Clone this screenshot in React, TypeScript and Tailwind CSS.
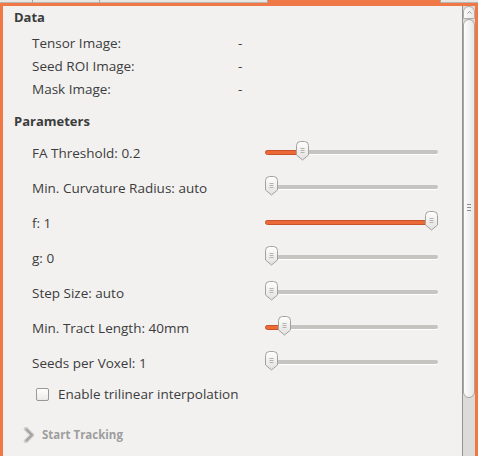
import React from "react";

const FONT = { fontFamily: '"Open Sans", "DejaVu Sans", sans-serif' };

function Thumb() {
  return (
    <svg width="13" height="20" viewBox="0 0 13 20" className="absolute top-[-9px]">
      <defs>
        <linearGradient id="tg" x1="0" y1="0" x2="0" y2="1">
          <stop offset="0" stopColor="#ffffff" />
          <stop offset="1" stopColor="#e2e0de" />
        </linearGradient>
      </defs>
      <path d="M0.5 4.5 Q0.5 0.5 4.5 0.5 L8.5 0.5 Q12.5 0.5 12.5 4.5 L12.5 14 L6.5 19 L0.5 14 Z" fill="url(#tg)" stroke="#a3a19e" />
      <line x1="4.5" y1="7.5" x2="8.5" y2="7.5" stroke="#b5b3b0" />
      <line x1="4.5" y1="9.5" x2="8.5" y2="9.5" stroke="#b5b3b0" />
      <line x1="4.5" y1="11.5" x2="8.5" y2="11.5" stroke="#b5b3b0" />
    </svg>
  );
}

function Slider({ pos }: { pos: number }) {
  return (
    <div className="relative w-[173px] h-[4px] rounded-full bg-[#c6c4c0] shadow-[0_1px_0_#ffffff]">
      {pos > 2 && (
        <div
          className="absolute left-0 top-[-0.5px] h-[5px] rounded-full bg-[#ec6a37] border border-[#c8532a]"
          style={{ width: pos + 6 }}
        />
      )}
      <div className="absolute top-0" style={{ left: pos }}>
        <Thumb />
      </div>
    </div>
  );
}

const params: [string, number][] = [
  ["FA Threshold: 0.2", 31],
  ["Min. Curvature Radius: auto", 0],
  ["f: 1", 160],
  ["g: 0", 0],
  ["Step Size: auto", 0],
  ["Min. Tract Length: 40mm", 13],
  ["Seeds per Voxel: 1", 0],
];

export default function App() {
  return (
    <div className="w-[478px] h-[456px] bg-[#f2f1f0] overflow-hidden flex flex-col text-[#3c3c3c]" style={FONT}>
      <div className="h-[3px] flex shrink-0">
        <div className="w-[33px] bg-[#e9e7e4] border-b border-[#b8b6b2] border-r border-r-[#a9a7a3]" />
        <div className="w-[67px] bg-[#e9e7e4] border-b border-[#b8b6b2] border-r border-r-[#a9a7a3]" />
        <div className="w-[168px] bg-[#e9e7e4] border-b border-[#b8b6b2] border-r border-r-[#a9a7a3]" />
        <div className="w-[172px] bg-[#f07746]" />
        <div className="flex-1 bg-[#e9e7e4] border-b border-[#b8b6b2] border-l border-l-[#a9a7a3]" />
      </div>
      <div className="flex-1 flex border-t-[3px] border-l-[3px] border-r-[3px] border-[#f07746] min-h-0">
        <div className="flex-1 flex flex-col">
          <div className="h-[24px] flex items-center pl-[11px] text-[13px] font-bold">Data</div>
          <div className="mt-[2px] flex flex-col text-[13.5px]">
            {["Tensor Image:", "Seed ROI Image:", "Mask Image:"].map((l) => (
              <div key={l} className="h-[23px] flex items-center pl-[29px]">
                <span className="w-[206px]">{l}</span>
                <span>-</span>
              </div>
            ))}
          </div>
          <div className="mt-[9px] h-[24px] flex items-center pl-[11px] text-[13px] font-bold">Parameters</div>
          <div className="mt-[1.5px] flex flex-col text-[13.5px]">
            {params.map(([l, p]) => (
              <div key={l} className="h-[35px] flex items-center pl-[29px]">
                <span className="w-[233px]">{l}</span>
                <div className="mt-[-2px]">
                  <Slider pos={p} />
                </div>
              </div>
            ))}
          </div>
          <div className="h-[27px] flex items-center pl-[33px] text-[13.5px]">
            <span className="w-[13px] h-[13px] rounded-[2px] border border-[#9a9895] bg-gradient-to-b from-[#ffffff] to-[#eceae8] mr-[9px]" />
            <span>Enable trilinear interpolation</span>
          </div>
          <div className="mt-[15.5px] h-[24px] flex items-center pl-[20px] text-[11.5px] font-bold text-[#9d9d9d]">
            <svg width="12" height="16" viewBox="0 0 12 16" className="mr-[7px]">
              <path d="M3 2 L9 8 L3 14" fill="none" stroke="#cfcecc" strokeWidth="4.5" strokeLinejoin="round" strokeLinecap="round" />
              <path d="M3 2 L9 8 L3 14" fill="none" stroke="#a2a19f" strokeWidth="2" />
            </svg>
            <span>Start Tracking</span>
          </div>
        </div>
        <div className="w-[13px] flex flex-col bg-[#dddbd8] border-l border-[#959390]">
          <div className="h-[13px] rounded-t-[6px] border border-[#b0aeab] bg-gradient-to-r from-[#fbfbfa] to-[#e9e8e6] flex items-center justify-center">
            <svg width="5" height="3" viewBox="0 0 5 3">
              <path d="M0.5 2.5 L2.5 0.5 L4.5 2.5" fill="none" stroke="#9a9896" />
            </svg>
          </div>
          <div className="h-[379px] rounded-[6px] border border-[#a8a6a3] bg-gradient-to-r from-[#fdfdfd] to-[#e7e6e4] flex items-center justify-center">
            <div className="flex flex-col gap-[2px] mt-[-2px]">
              <div className="w-[4px] h-[1px] bg-[#8e8c8a]" />
              <div className="w-[4px] h-[1px] bg-[#8e8c8a]" />
              <div className="w-[4px] h-[1px] bg-[#8e8c8a]" />
            </div>
          </div>
        </div>
      </div>
    </div>
  );
}
